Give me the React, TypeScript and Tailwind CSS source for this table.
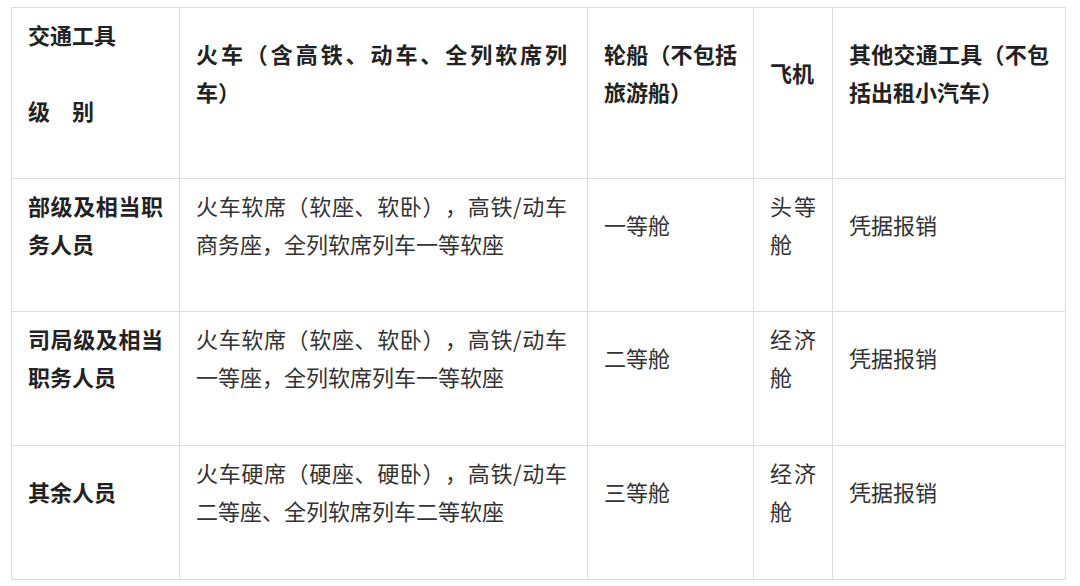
const rows = [
  {
    level: "部级及相当职务人员",
    train: "火车软席（软座、软卧），高铁/动车商务座，全列软席列车一等软座",
    ship: "一等舱",
    plane: "头等舱",
    other: "凭据报销",
    pad: "pb-[49px]",
  },
  {
    level: "司局级及相当职务人员",
    train: "火车软席（软座、软卧），高铁/动车一等座，全列软席列车一等软座",
    ship: "二等舱",
    plane: "经济舱",
    other: "凭据报销",
    pad: "pb-[50px]",
  },
  {
    level: "其余人员",
    train: "火车硬席（硬座、硬卧），高铁/动车二等座、全列软席列车二等软座",
    ship: "三等舱",
    plane: "经济舱",
    other: "凭据报销",
    pad: "pb-[50px]",
  },
];

const cell =
  "border border-[#dcdcdc] pt-[7px] pl-4 pr-4 align-middle text-justify leading-[38px]";

export default function App() {
  return (
    <div
      className="min-h-[586px] bg-white pl-[11px] pt-[7px] text-[22px] [text-spacing-trim:space-all]"
      style={{ fontFamily: '"Noto Sans CJK SC", "Noto Sans", sans-serif' }}
    >
      <table className="w-[1054px] table-fixed border-collapse">
        <colgroup>
          <col className="w-[168px]" />
          <col className="w-[408px]" />
          <col className="w-[166px]" />
          <col className="w-[79px]" />
          <col className="w-[233px]" />
        </colgroup>
        <thead>
          <tr className="font-bold text-[#222]">
            <th className={`${cell} pb-[49px] font-bold`}>
              交通工具
              <br />
              <br />
              级　别
            </th>
            <th className={`${cell} !pr-5 pb-[49px] font-bold`}>
              火车（含高铁、动车、全列软席列车）
            </th>
            <th className={`${cell} pb-[49px] font-bold`}>轮船（不包括旅游船）</th>
            <th className={`${cell} pb-[49px] font-bold`}>飞机</th>
            <th className={`${cell} pb-[49px] font-bold`}>
              其他交通工具（不包括出租小汽车）
            </th>
          </tr>
        </thead>
        <tbody>
          {rows.map((r) => (
            <tr key={r.level} className="text-[#333]">
              <td className={`${cell} ${r.pad} font-bold text-[#222]`}>{r.level}</td>
              <td className={`${cell} ${r.pad} !pr-5`}>{r.train}</td>
              <td className={`${cell} ${r.pad}`}>{r.ship}</td>
              <td className={`${cell} ${r.pad}`}>{r.plane}</td>
              <td className={`${cell} ${r.pad}`}>{r.other}</td>
            </tr>
          ))}
        </tbody>
      </table>
    </div>
  );
}
